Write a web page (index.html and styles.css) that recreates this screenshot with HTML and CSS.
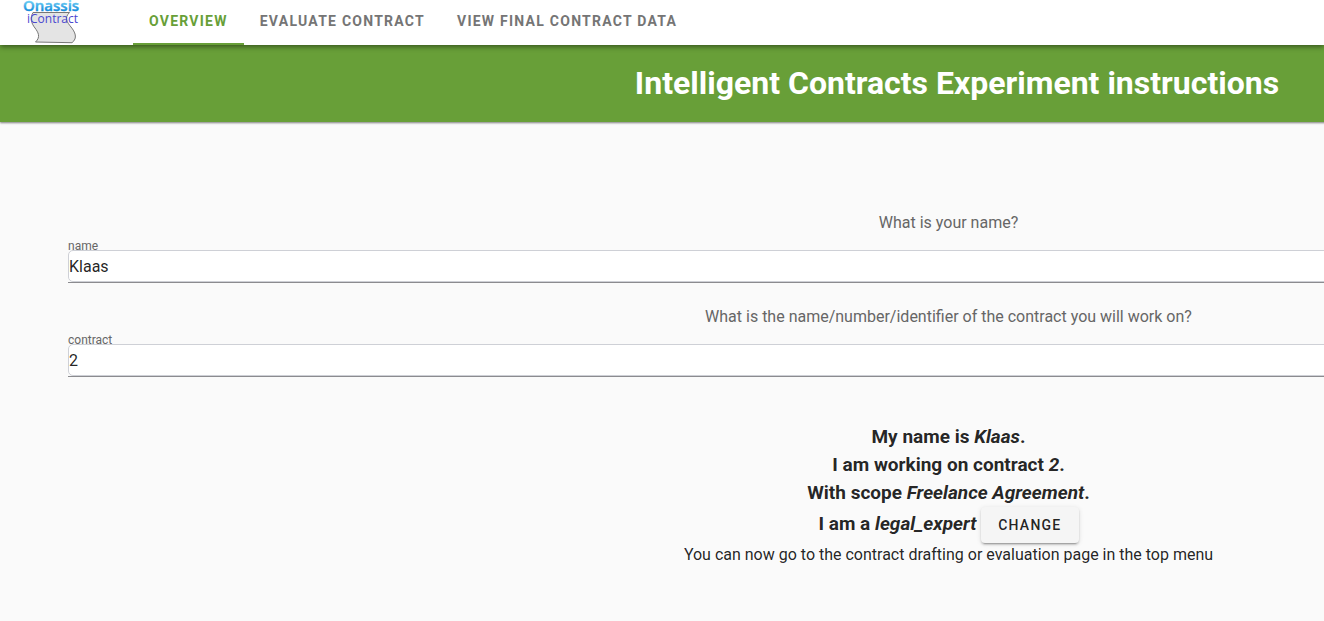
FILE: index.html
```html
<!DOCTYPE html>
<html lang="en">
<head>
<meta charset="utf-8">
<title>Onassis iContract</title>
<link rel="stylesheet" href="styles.css">
</head>
<body>
<header class="topbar">
  <a class="brand" href="#" aria-label="Onassis iContract">
    <svg class="logo" width="60" height="45" viewBox="0 0 60 45">
      <defs>
        <linearGradient id="sky" x1="0" y1="0" x2="0" y2="1">
          <stop offset="0.3" stop-color="#6fd0f5"/>
          <stop offset="0.75" stop-color="#1a8fdc"/>
        </linearGradient>
      </defs>
      <path d="M13 12.500H49.500C44 18 47 22 51 27C55 32 58 38 52 42.700L15.500 42C21 37 18 32 15 28C11 23 10 18 13 12.500Z" fill="#e4e4e4" stroke="#777" stroke-width="1"/>
      <text class="logo-sub" x="7" y="23">iContract</text>
      <text class="logo-name" x="3" y="11" fill="url(#sky)" stroke="url(#sky)">Onassis</text>
    </svg>
  </a>
  <nav class="tabs">
    <a class="tab tab-active" href="#">Overview</a>
    <a class="tab" href="#">Evaluate contract</a>
    <a class="tab" href="#">View final contract data</a>
  </nav>
</header>
<div class="banner"><h1 class="banner-title">Intelligent Contracts Experiment instructions</h1></div>
<main class="content">
  <section class="question">
    <p class="prompt">What is your name?</p>
    <label class="field-label" for="name">name</label>
    <div class="field"><input class="field-input" id="name" type="text" value="Klaas"></div>
  </section>
  <section class="question">
    <p class="prompt">What is the name/number/identifier of the contract you will work on?</p>
    <label class="field-label" for="contract">contract</label>
    <div class="field"><input class="field-input" id="contract" type="text" value="2"></div>
  </section>
  <section class="summary">
    <h3 class="line">My name is <em>Klaas</em>.</h3>
    <h3 class="line">I am working on contract <em>2</em>.</h3>
    <h3 class="line">With scope <em>Freelance Agreement</em>.</h3>
    <h3 class="line">I am a <em>legal_expert</em> <button class="change" type="button">Change</button></h3>
    <p class="hint">You can now go to the contract drafting or evaluation page in the top menu</p>
  </section>
</main>
</body>
</html>
```
FILE: styles.css
```css
* {
  box-sizing: border-box;
}

body {
  margin: 0;
  overflow: hidden;
  background: #fafafa;
  color: rgba(0, 0, 0, 0.87);
  font-family: Roboto, "Liberation Sans", sans-serif;
  font-size: 16px;
  line-height: 24px;
}

h1, h3, p {
  margin: 0;
}

.topbar {
  position: relative;
  z-index: 1;
  display: flex;
  height: 45px;
  background: #fff;
  box-shadow: 0 2px 4px -1px rgba(0, 0, 0, 0.3), 0 3px 5px rgba(0, 0, 0, 0.2);
}

.brand {
  width: 133px;
  padding-left: 20px;
}

.logo {
  display: block;
}

.logo-name {
  stroke-width: 0.4px;
  font: 600 15px "Open Sans", sans-serif;
}

.logo-sub {
  fill: #4a48d0;
  font: 12px "Open Sans", sans-serif;
}

.tabs {
  display: flex;
}

.tab {
  display: flex;
  align-items: center;
  padding: 0 16px 2px;
  border-bottom: 2px solid transparent;
  color: #757575;
  font-size: 14px;
  font-weight: 700;
  letter-spacing: 1.25px;
  line-height: 20px;
  text-decoration: none;
  text-transform: uppercase;
}

.tab-active {
  border-color: #689f38;
  color: #689f38;
}

.banner {
  width: calc(100% + 590px);
  padding: 14px 0 15px;
  background: #689f38;
  box-shadow: 0 1px 2px rgba(0, 0, 0, 0.5);
  color: #fff;
  text-align: center;
}

.banner-title {
  font-size: 32px;
  font-weight: 700;
  line-height: 48px;
}

.content {
  width: calc(100% + 573px);
  padding: 89px 68px 0;
}

.question {
  margin-bottom: 22px;
}

.prompt {
  margin-bottom: 5px;
  color: #666;
  text-align: center;
}

.field-label {
  display: block;
  height: 10px;
  color: #666;
  font-size: 12px;
  line-height: 12px;
}

.field {
  border-bottom: 1px solid #8b8b8f;
}

.field-input {
  display: block;
  width: 100%;
  height: 32px;
  padding: 0;
  border: 1px solid #ced0d6;
  border-radius: 5px;
  background: #fff;
  color: rgba(0, 0, 0, 0.87);
  font: inherit;
}

.summary {
  padding-top: 24px;
  text-align: center;
}

.line {
  font-size: 19px;
  font-weight: 700;
  line-height: 28px;
}

.change {
  height: 36px;
  padding: 0 17px;
  border: 0;
  border-radius: 4px;
  background: #f5f5f5;
  box-shadow: 0 3px 1px -2px rgba(0, 0, 0, 0.2), 0 2px 2px rgba(0, 0, 0, 0.14), 0 1px 5px rgba(0, 0, 0, 0.12);
  color: inherit;
  font: 500 14px Roboto, sans-serif;
  letter-spacing: 1.25px;
  text-transform: uppercase;
  vertical-align: middle;
}
```
